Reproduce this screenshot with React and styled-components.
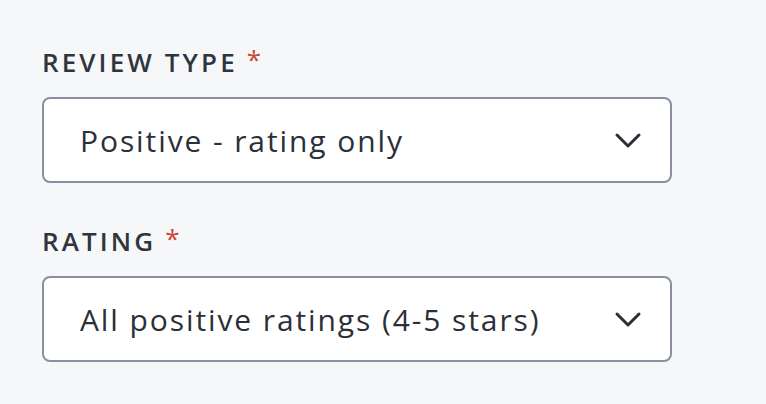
import styled, { createGlobalStyle } from "styled-components";

const GlobalStyle = createGlobalStyle`
  html, body {
    margin: 0;
    padding: 0;
    background: #f6f7f9;
  }
  body {
    font-family: "Open Sans", Lato, sans-serif;
    color: #2b3038;
  }
`;

const Page = styled.div`
  width: 766px;
  height: 404px;
  box-sizing: border-box;
  padding: 44px 0 0 42px;
  display: flex;
  flex-direction: column;
  gap: 40px;
`;

const Field = styled.div`
  display: flex;
  flex-direction: column;
  gap: 16px;
`;

const Label = styled.label`
  display: flex;
  align-items: flex-start;
  font-size: 26px;
  line-height: 37px;
  font-weight: 600;
  letter-spacing: 3.1px;
  text-transform: uppercase;
  color: #30353d;
`;

const Required = styled.span`
  color: #cc4433;
  margin-left: 9px;
  font-size: 26px;
  line-height: 30px;
  font-weight: 400;
  letter-spacing: 0;
`;

const Select = styled.div`
  width: 630px;
  height: 86px;
  box-sizing: border-box;
  border: 2px solid #8a90a1;
  border-radius: 8px;
  background: #fff;
  display: flex;
  align-items: center;
  justify-content: space-between;
  padding: 0 28px 0 36px;
`;

const Value = styled.span`
  font-size: 30px;
  color: #2b3038;
  letter-spacing: 1.9px;
`;

const Chevron = () => (
  <svg width="28" height="17" viewBox="0 0 28 17" fill="none">
    <path
      d="M3 3 L14 14 L25 3"
      stroke="#2b3038"
      strokeWidth="3"
      strokeLinecap="round"
      strokeLinejoin="round"
    />
  </svg>
);

const SelectField = ({ label, value }) => (
  <Field>
    <Label>
      {label}
      <Required>*</Required>
    </Label>
    <Select>
      <Value>{value}</Value>
      <Chevron />
    </Select>
  </Field>
);

export default function App() {
  return (
    <>
      <GlobalStyle />
      <Page>
        <SelectField label="Review type" value="Positive - rating only" />
        <SelectField label="Rating" value="All positive ratings (4-5 stars)" />
      </Page>
    </>
  );
}
